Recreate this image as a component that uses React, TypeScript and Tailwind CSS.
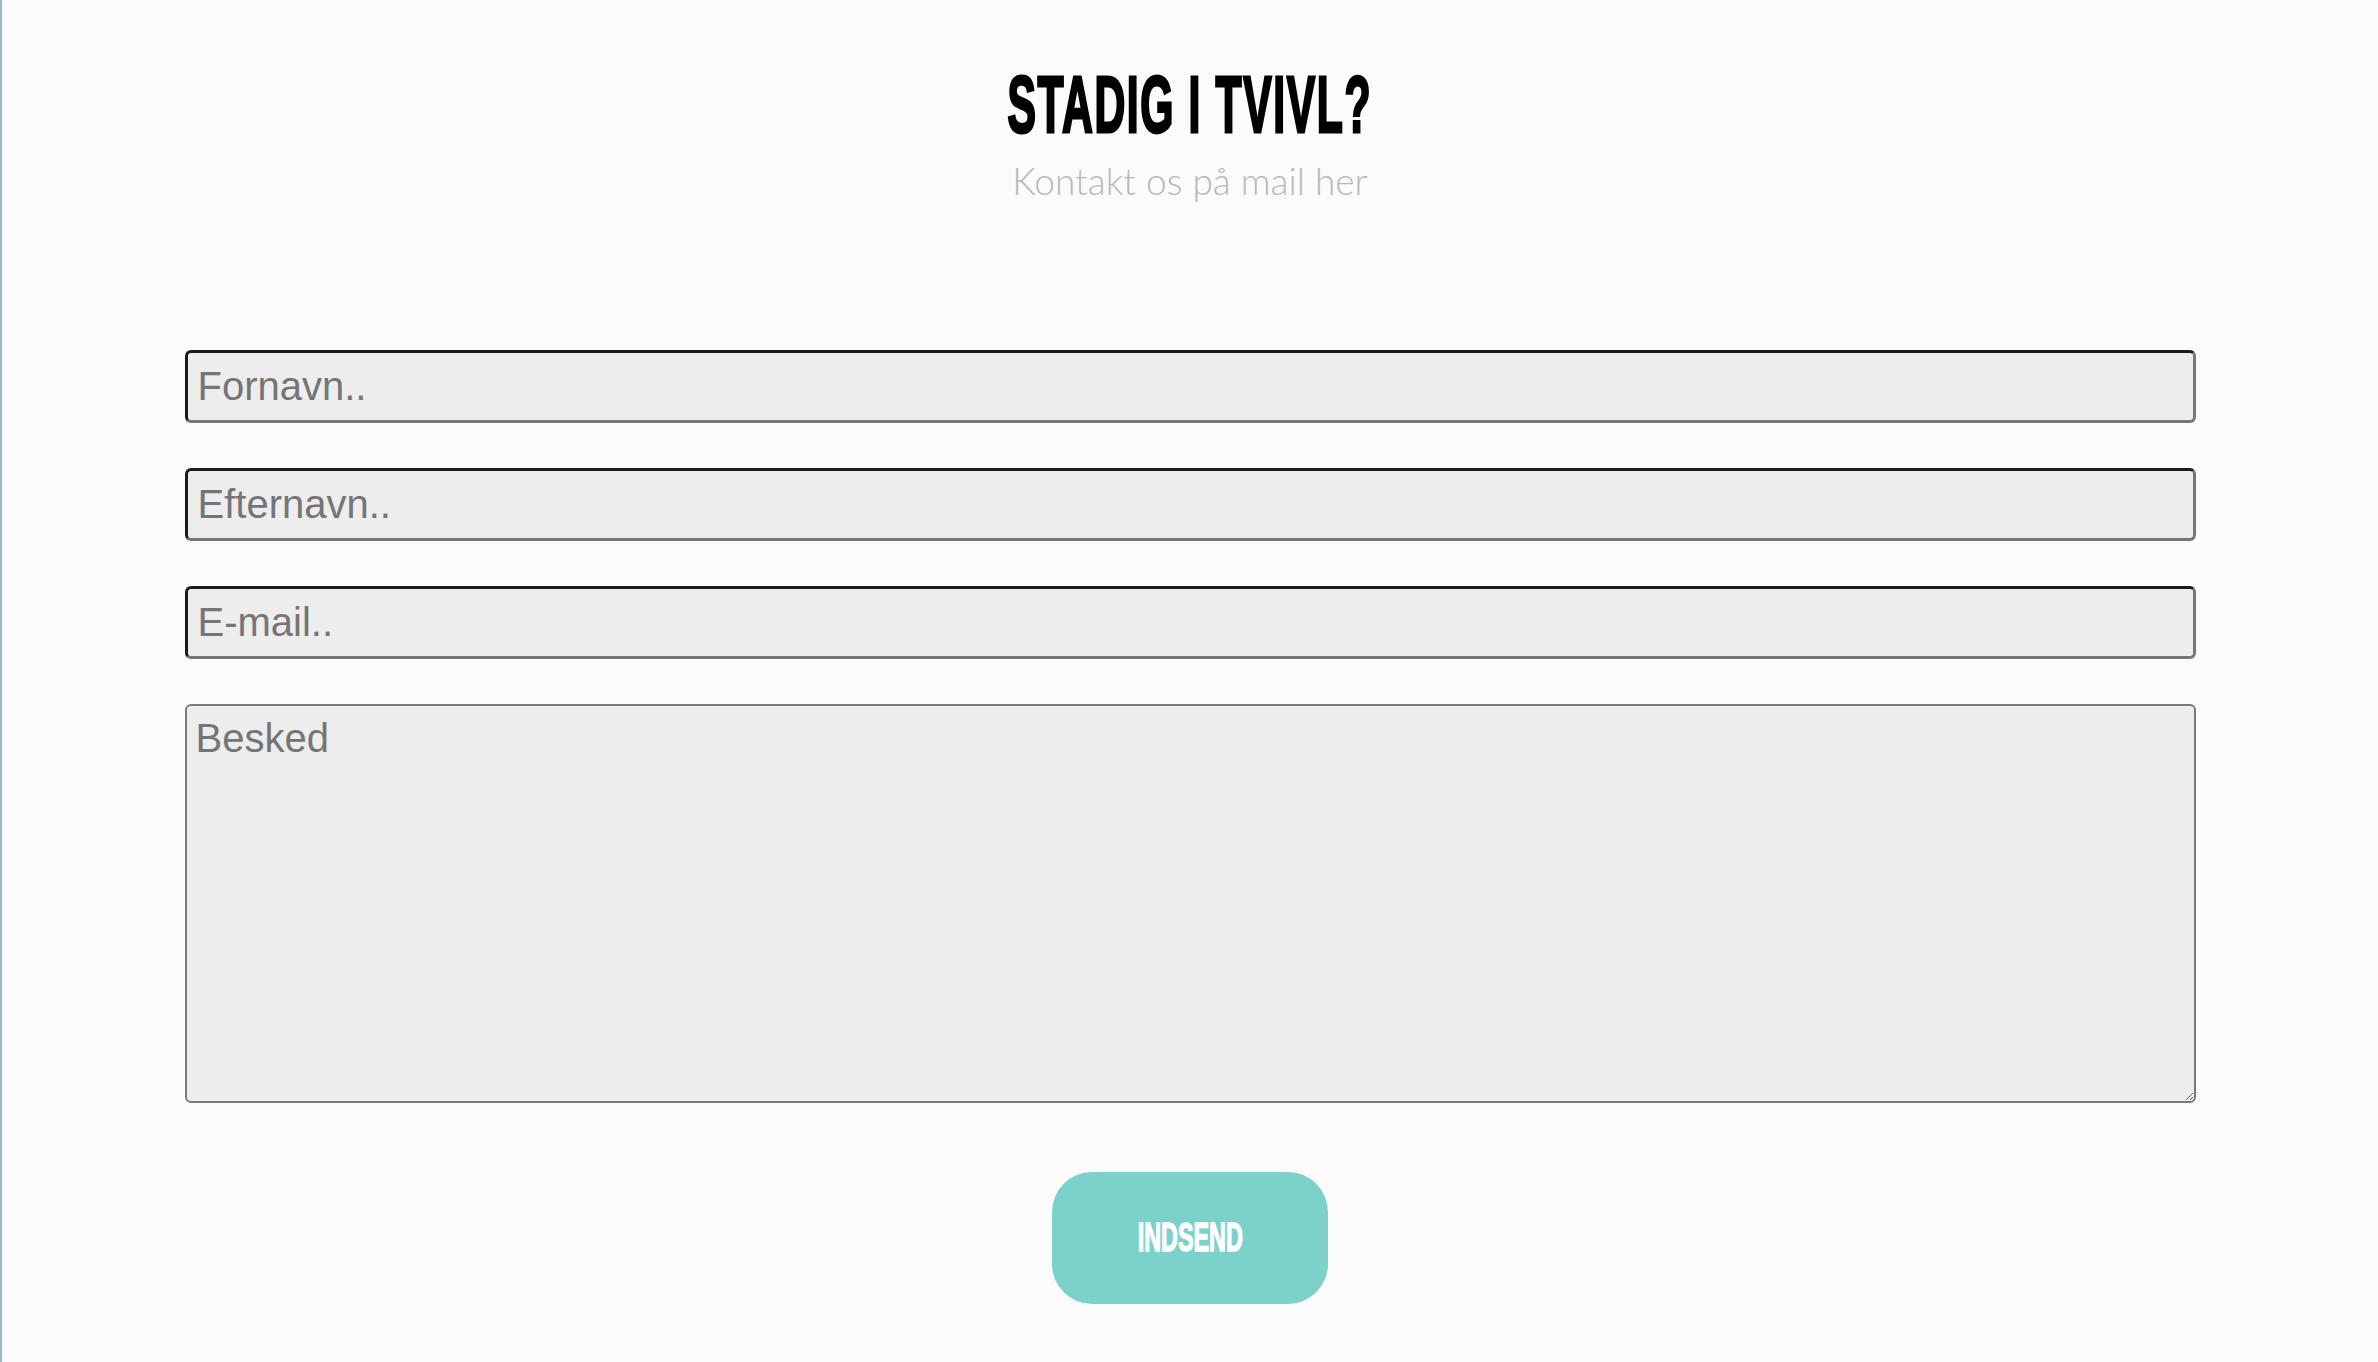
export default function App() {
  return (
    <div className="min-h-[1362px] w-full border-l-2 border-[#9bb8c5] bg-[#fbfbfb]">
      <section className="flex flex-col items-center pt-[64px]">
        {/* Heading */}
        <h2 className="inline-block origin-center scale-x-[0.54] font-['Liberation_Sans_Narrow','Liberation_Sans',sans-serif] text-[79px] font-bold leading-[81px] tracking-[3px] text-black [-webkit-text-stroke:3px_#000]">
          STADIG I TVIVL?
        </h2>
        <p className="mt-[12px] font-['Lato',sans-serif] text-[37px] font-light leading-[48px] text-[#b8b8b8]">
          Kontakt os på mail her
        </p>
      </section>

      {/* Form */}
      <form className="mx-auto mt-[145px] flex w-[2011px] flex-col gap-[45px] font-['Liberation_Sans',Arial,sans-serif]">
        <input
          type="text"
          placeholder="Fornavn.."
          className="h-[73px] w-full rounded-[6px] border-[3px] border-b-[#777777] border-l-[#1c1c1c] border-r-[#777777] border-t-[#1c1c1c] bg-[#ededed] pl-[10px] text-[40px] text-black outline-none placeholder:text-[#757575]"
        />
        <input
          type="text"
          placeholder="Efternavn.."
          className="h-[73px] w-full rounded-[6px] border-[3px] border-b-[#777777] border-l-[#1c1c1c] border-r-[#777777] border-t-[#1c1c1c] bg-[#ededed] pl-[10px] text-[40px] text-black outline-none placeholder:text-[#757575]"
        />
        <input
          type="email"
          placeholder="E-mail.."
          className="h-[73px] w-full rounded-[6px] border-[3px] border-b-[#777777] border-l-[#1c1c1c] border-r-[#777777] border-t-[#1c1c1c] bg-[#ededed] pl-[10px] text-[40px] text-black outline-none placeholder:text-[#757575]"
        />
        <textarea
          placeholder="Besked"
          className="h-[399px] w-full rounded-[6px] border-2 border-[#7a7a7a] bg-[#ededed] px-[9px] pt-[2px] text-[40px] text-black outline-none placeholder:text-[#757575]"
        />

        <div className="mt-[24px] flex justify-center">
          <button
            type="button"
            className="flex h-[132px] w-[276px] items-center justify-center rounded-[40px] bg-[#7dd1cb]"
          >
            <span className="inline-block scale-x-[0.57] font-['Liberation_Sans_Narrow','Liberation_Sans',sans-serif] text-[41px] font-bold text-white [-webkit-text-stroke:1.5px_#fff]">
              INDSEND
            </span>
          </button>
        </div>
      </form>
    </div>
  );
}
